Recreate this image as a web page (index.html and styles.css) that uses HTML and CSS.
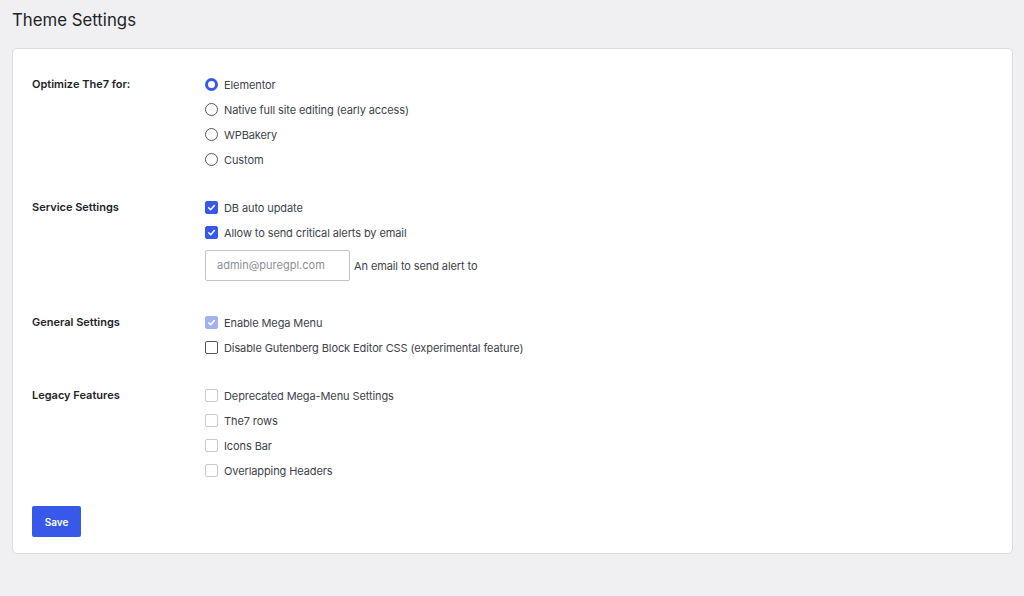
FILE: index.html
```html
<!DOCTYPE html>
<html lang="en">
<head>
<meta charset="utf-8">
<title>Theme Settings</title>
<link rel="stylesheet" href="styles.css">
</head>
<body>
<div class="wrap">
  <h1 class="page-title">Theme Settings</h1>
  <div class="card">
    <div class="section">
      <div class="label">Optimize The7 for:</div>
      <div class="controls">
        <div class="opt"><span class="radio on"></span><span>Elementor</span></div>
        <div class="opt"><span class="radio"></span><span>Native full site editing (early access)</span></div>
        <div class="opt"><span class="radio"></span><span>WPBakery</span></div>
        <div class="opt"><span class="radio"></span><span>Custom</span></div>
      </div>
    </div>
    <div class="section">
      <div class="label">Service Settings</div>
      <div class="controls">
        <div class="opt"><span class="cb on"><svg viewBox="0 0 13 13"><path d="M3.2 6.8 L5.5 9.1 L9.9 4.2"/></svg></span><span>DB auto update</span></div>
        <div class="opt"><span class="cb on"><svg viewBox="0 0 13 13"><path d="M3.2 6.8 L5.5 9.1 L9.9 4.2"/></svg></span><span>Allow to send critical alerts by email</span></div>
        <div class="email-row">
          <div class="input">admin@puregpl.com</div>
          <span class="hint">An email to send alert to</span>
        </div>
      </div>
    </div>
    <div class="section">
      <div class="label">General Settings</div>
      <div class="controls">
        <div class="opt"><span class="cb dis-on"><svg viewBox="0 0 13 13"><path d="M3.2 6.8 L5.5 9.1 L9.9 4.2"/></svg></span><span>Enable Mega Menu</span></div>
        <div class="opt"><span class="cb"></span><span>Disable Gutenberg Block Editor CSS (experimental feature)</span></div>
      </div>
    </div>
    <div class="section">
      <div class="label">Legacy Features</div>
      <div class="controls">
        <div class="opt"><span class="cb dis"></span><span>Deprecated Mega-Menu Settings</span></div>
        <div class="opt"><span class="cb dis"></span><span>The7 rows</span></div>
        <div class="opt"><span class="cb dis"></span><span>Icons Bar</span></div>
        <div class="opt"><span class="cb dis"></span><span>Overlapping Headers</span></div>
      </div>
    </div>
    <div class="actions">
      <button class="save" type="button">Save</button>
    </div>
  </div>
</div>
</body>
</html>
```

FILE: styles.css
```css
* { box-sizing: border-box; }
html, body { margin: 0; padding: 0; }
body {
  background: #f0f0f2;
  font-family: Inter, "Liberation Sans", Arial, sans-serif;
  color: #3c434a;
  font-size: 11px;
}
.wrap {
  padding: 9px 11px 0 12px;
}
.page-title {
  margin: 0;
  font-size: 16.8px;
  font-weight: 400;
  color: #1d2327;
  line-height: 22px;
  height: 39px;
}
.card {
  background: #fff;
  border: 1px solid #dcdcde;
  border-radius: 5px;
  padding: 23px 20px 16px 19px;
}
.section {
  display: grid;
  grid-template-columns: 173px 1fr;
  margin-bottom: 23px;
}
.label {
  font-weight: 600;
  color: #1d2327;
  line-height: 25px;
  height: 25px;
}
.controls {
  display: flex;
  flex-direction: column;
}
.opt {
  display: flex;
  align-items: center;
  height: 25px;
  gap: 6px;
  color: #3c434a;
  letter-spacing: -0.1px;
}
.radio {
  width: 13px;
  height: 13px;
  border-radius: 50%;
  border: 1.3px solid #50575e;
  flex: none;
}
.radio.on {
  border: 3.6px solid #3858e9;
}
.cb {
  width: 13px;
  height: 13px;
  border-radius: 2px;
  border: 1.3px solid #50575e;
  flex: none;
  display: flex;
  align-items: center;
  justify-content: center;
}
.cb svg {
  width: 13px;
  height: 13px;
  fill: none;
  stroke: #fff;
  stroke-width: 1.8;
  stroke-linecap: round;
  stroke-linejoin: round;
}
.cb.on {
  background: #3858e9;
  border-color: #3858e9;
}
.cb.dis-on {
  background: #a3b1f3;
  border-color: #a3b1f3;
}
.cb.dis {
  border-color: #c9cacd;
}
.email-row {
  display: flex;
  align-items: center;
  gap: 4px;
  margin: 5px 0 6px;
}
.input {
  width: 145px;
  height: 31px;
  border: 1px solid #c3c4c7;
  border-radius: 2px;
  padding-left: 11px;
  line-height: 29px;
  color: #8c8f94;
}
.hint {
  color: #3c434a;
  letter-spacing: -0.1px;
}
.actions {
  display: flex;
}
.save {
  width: 49px;
  height: 31px;
  background: #3858e9;
  color: #fff;
  border: none;
  border-radius: 2px;
  font-family: inherit;
  font-size: 10px;
  font-weight: 600;
  padding: 0;
  margin-top: 0;
}
```
